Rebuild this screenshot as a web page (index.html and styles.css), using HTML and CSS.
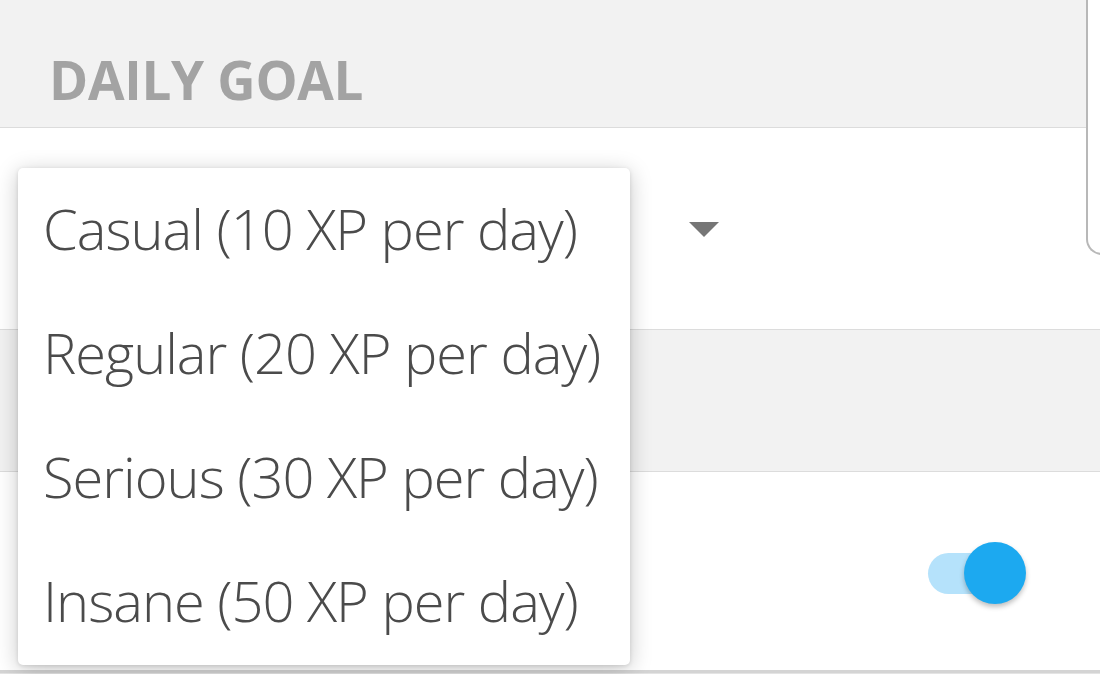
FILE: index.html
```html
<!DOCTYPE html>
<html>
<head>
<meta charset="utf-8">
<link rel="stylesheet" href="styles.css">
</head>
<body>
<div class="page">
  <div class="card-edge"></div>
  <section class="header">
    <h2 class="title">DAILY GOAL</h2>
  </section>
  <section class="row row-select">
    <span class="caret"></span>
  </section>
  <section class="band"></section>
  <section class="row row-toggle">
    <div class="toggle">
      <span class="track"></span>
      <span class="knob"></span>
    </div>
  </section>
  <div class="menu">
    <div class="item">Casual (10 XP per day)</div>
    <div class="item">Regular (20 XP per day)</div>
    <div class="item">Serious (30 XP per day)</div>
    <div class="item">Insane (50 XP per day)</div>
  </div>
</div>
</body>
</html>
```
FILE: styles.css
```css
html, body {
  margin: 0;
  padding: 0;
  background: #e4e4e4;
}
.page {
  position: relative;
  width: 1100px;
  height: 674px;
  overflow: hidden;
  font-family: "Open Sans", "DejaVu Sans", sans-serif;
}
.header {
  height: 128px;
  background: #f2f2f2;
  border-bottom: 1px solid #dcdcdc;
  box-sizing: border-box;
  display: flex;
  align-items: flex-end;
  padding: 0 0 21px 49px;
}
.title {
  margin: 0;
  font-size: 53px;
  font-weight: 700;
  color: #a3a3a3;
  line-height: 1;
  letter-spacing: -0.3px;
}
.row {
  background: #fff;
  border-bottom: 1px solid #dcdcdc;
  position: relative;
}
.row-select {
  height: 201px;
  display: flex;
  align-items: flex-start;
}
.caret {
  margin: 94px 0 0 689px;
  width: 0;
  height: 0;
  border-left: 15px solid transparent;
  border-right: 15px solid transparent;
  border-top: 15px solid #767676;
}
.band {
  height: 141px;
  background: #f2f2f2;
  border-bottom: 1px solid #dcdcdc;
}
.row-toggle {
  height: 198px;
  border-bottom: 3px solid #d4d4d4;
}
.toggle {
  position: absolute;
  left: 928px;
  top: 70px;
  width: 98px;
  height: 63px;
}
.track {
  position: absolute;
  left: 0;
  top: 11px;
  width: 80px;
  height: 41px;
  border-radius: 21px;
  background: #b5e2fb;
}
.knob {
  position: absolute;
  left: 36px;
  top: 0;
  width: 62px;
  height: 62px;
  border-radius: 50%;
  background: #1ca9f0;
  box-shadow: 0 3px 5px rgba(0,0,0,0.25);
}
.card-edge {
  position: absolute;
  left: 1086px;
  top: -20px;
  width: 40px;
  height: 273px;
  background: #fff;
  border-left: 2px solid #b8b8b8;
  border-bottom: 2px solid #b8b8b8;
  border-bottom-left-radius: 16px;
  z-index: 2;
}
.menu {
  position: absolute;
  left: 18px;
  top: 168px;
  width: 612px;
  height: 497px;
  background: #fff;
  border-radius: 5px;
  box-shadow: 0 4px 22px rgba(0,0,0,0.22), 0 1px 4px rgba(0,0,0,0.12);
  z-index: 3;
  display: flex;
  flex-direction: column;
  gap: 44px;
  padding-top: 20px;
  box-sizing: border-box;
}
.item {
  flex: 0 0 80px;
  padding-left: 25px;
  font-size: 56px;
  font-weight: 300;
  color: #4b4b4b;
  line-height: 80px;
  letter-spacing: -1px;
  white-space: nowrap;
}
```
